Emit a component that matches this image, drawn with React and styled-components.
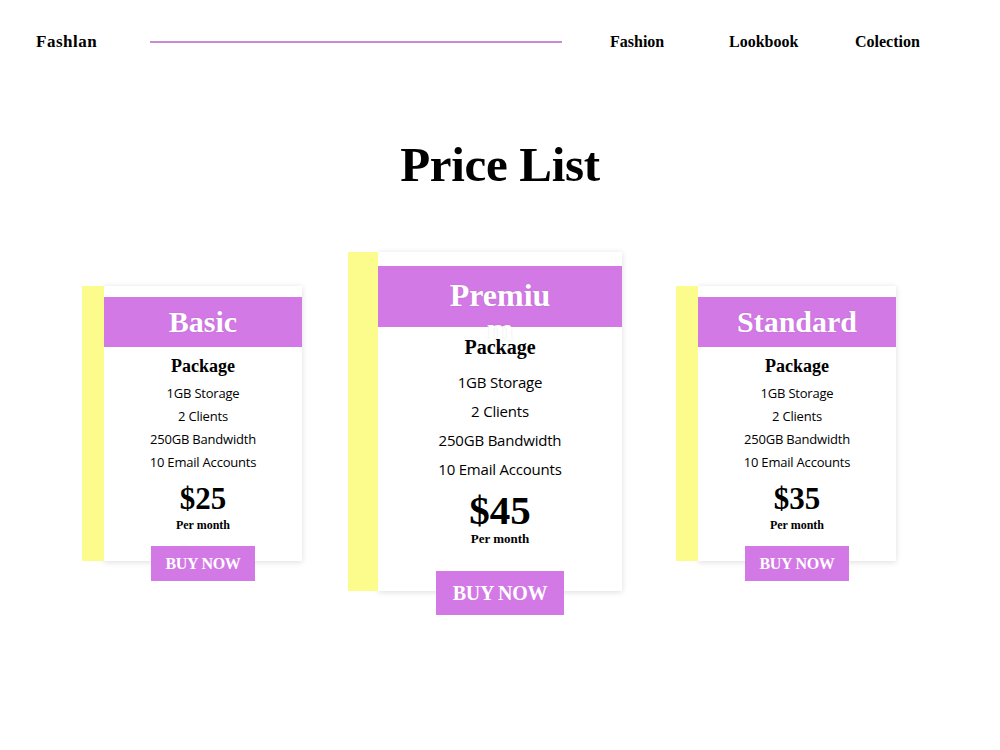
import React from "react";
import styled, { createGlobalStyle, css } from "styled-components";

const Global = createGlobalStyle`
  html, body { margin: 0; padding: 0; background: #fff; }
  body { font-family: "Open Sans", "Noto Sans", sans-serif; color: #000; }
  * { box-sizing: border-box; }
`;

const PURPLE = "#d379e6";
const YELLOW = "#fbfc8c";
const DISPLAY = `"Liberation Serif", "DejaVu Serif", serif`;

const Page = styled.div`
  width: 1000px;
  min-height: 750px;
`;

const TopBar = styled.header`
  height: 84px;
  display: flex;
  align-items: center;
  padding: 0 36px;
`;

const Logo = styled.div`
  font-family: ${DISPLAY};
  font-weight: 700;
  font-size: 17px;
  width: 114px;
  letter-spacing: 0.5px;
`;

const Rule = styled.div`
  width: 412px;
  height: 2px;
  background: #c98bd6;
`;

const Nav = styled.nav`
  display: flex;
  margin-left: 48px;
`;

const NavLink = styled.a`
  font-family: ${DISPLAY};
  font-weight: 700;
  font-size: 16px;
  color: #000;
  text-decoration: none;
  width: ${(p) => p.$w}px;
`;

const Title = styled.h1`
  margin: 56px 0 0;
  text-align: center;
  font-family: ${DISPLAY};
  font-weight: 700;
  font-size: 49px;
  line-height: 50px;
  letter-spacing: -0.3px;
`;

const Row = styled.div`
  display: flex;
  justify-content: center;
  align-items: center;
  gap: 76px;
  margin-top: 62px;
`;

const Plan = styled.div`
  display: flex;
  flex-direction: column;
  align-items: center;
  width: ${(p) => (p.$big ? 244 : 198)}px;
`;

const Card = styled.div`
  width: 100%;
  background: #fff;
  display: flex;
  flex-direction: column;
  align-items: center;
  box-shadow: ${(p) => (p.$big ? -30 : -22)}px 0 0 0 ${YELLOW},
    0 1px 6px rgba(0, 0, 0, 0.14);
  padding-top: ${(p) => (p.$big ? 14 : 11)}px;
  padding-bottom: ${(p) => (p.$big ? 44 : 29)}px;
`;

const Header = styled.div`
  width: 100%;
  background: ${PURPLE};
  display: flex;
  justify-content: center;
  height: ${(p) => (p.$big ? 61 : 50)}px;
  position: relative;
  z-index: 0;
`;

const PlanName = styled.h2`
  margin: 0;
  font-family: ${DISPLAY};
  font-weight: 700;
  color: #fff;
  text-align: center;
  text-shadow: 0 0 2px rgba(0, 0, 0, 0.12);
  ${(p) =>
    p.$big
      ? css`
          font-size: 32px;
          line-height: 34px;
          padding-top: 12px;
          width: 118px;
          word-break: break-all;
        `
      : css`
          font-size: 30px;
          line-height: 50px;
          white-space: nowrap;
        `}
`;

const Package = styled.h3`
  margin: ${(p) => (p.$big ? 7 : 8)}px 0 0;
  font-family: ${DISPLAY};
  font-weight: 700;
  font-size: ${(p) => (p.$big ? 20 : 18)}px;
  line-height: ${(p) => (p.$big ? 26 : 22)}px;
  position: relative;
  z-index: 1;
`;

const Features = styled.ul`
  list-style: none;
  margin: ${(p) => (p.$big ? 7.5 : 4.5)}px 0 0;
  padding: 0;
  text-align: center;
`;

const Feature = styled.li`
  font-size: ${(p) => (p.$big ? 15 : 13)}px;
  line-height: ${(p) => (p.$big ? 29 : 23)}px;
  letter-spacing: -0.2px;
`;

const Price = styled.div`
  margin-top: ${(p) => (p.$big ? 4.5 : 8.5)}px;
  font-family: ${DISPLAY};
  font-weight: 700;
  font-size: ${(p) => (p.$big ? 41 : 31)}px;
  line-height: ${(p) => (p.$big ? 44 : 34)}px;
`;

const Period = styled.div`
  margin-top: ${(p) => (p.$big ? -1 : 2)}px;
  font-family: ${DISPLAY};
  font-weight: 700;
  font-size: ${(p) => (p.$big ? 13 : 12)}px;
  line-height: ${(p) => (p.$big ? 16 : 14)}px;
`;

const BuyButton = styled.button`
  border: 0;
  background: ${PURPLE};
  color: #fff;
  font-family: ${DISPLAY};
  font-weight: 700;
  cursor: pointer;
  padding: 0;
  position: relative;
  ${(p) =>
    p.$big
      ? css`
          width: 128px;
          height: 44px;
          margin-top: -20px;
          font-size: 20px;
        `
      : css`
          width: 104px;
          height: 35px;
          margin-top: -15px;
          font-size: 16px;
        `}
  letter-spacing: -0.3px;
`;

const plans = [
  { name: "Basic", price: "$25" },
  { name: "Premium", price: "$45", big: true },
  { name: "Standard", price: "$35" },
];

const features = ["1GB Storage", "2 Clients", "250GB Bandwidth", "10 Email Accounts"];

export default function App() {
  return (
    <Page>
      <Global />
      <TopBar>
        <Logo>Fashlan</Logo>
        <Rule />
        <Nav>
          <NavLink href="#" $w={119}>Fashion</NavLink>
          <NavLink href="#" $w={126}>Lookbook</NavLink>
          <NavLink href="#" $w={80}>Colection</NavLink>
        </Nav>
      </TopBar>
      <Title>Price List</Title>
      <Row>
        {plans.map((p) => (
          <Plan key={p.name} $big={p.big}>
            <Card $big={p.big}>
              <Header $big={p.big}>
                <PlanName $big={p.big}>{p.name}</PlanName>
              </Header>
              <Package $big={p.big}>Package</Package>
              <Features $big={p.big}>
                {features.map((f) => (
                  <Feature key={f} $big={p.big}>{f}</Feature>
                ))}
              </Features>
              <Price $big={p.big}>{p.price}</Price>
              <Period $big={p.big}>Per month</Period>
            </Card>
            <BuyButton $big={p.big}>BUY NOW</BuyButton>
          </Plan>
        ))}
      </Row>
    </Page>
  );
}
